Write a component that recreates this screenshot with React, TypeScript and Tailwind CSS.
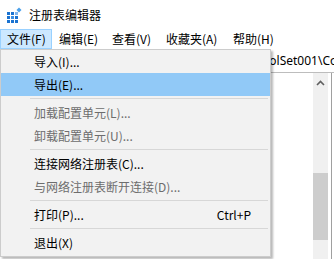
import React from 'react';

type MenuItem =
  | { kind: 'item'; label: string; disabled?: boolean; active?: boolean; shortcut?: string }
  | { kind: 'sep' };

const fileMenu: MenuItem[] = [
  { kind: 'item', label: '导入(I)...' },
  { kind: 'item', label: '导出(E)...', active: true },
  { kind: 'sep' },
  { kind: 'item', label: '加载配置单元(L)...', disabled: true },
  { kind: 'item', label: '卸载配置单元(U)...', disabled: true },
  { kind: 'sep' },
  { kind: 'item', label: '连接网络注册表(C)...' },
  { kind: 'item', label: '与网络注册表断开连接(D)...', disabled: true },
  { kind: 'sep' },
  { kind: 'item', label: '打印(P)...', shortcut: 'Ctrl+P' },
  { kind: 'sep' },
  { kind: 'item', label: '退出(X)' },
];

const menuBar = [
  { label: '文件(F)', width: 'w-[52px]', open: true },
  { label: '编辑(E)', width: 'w-[53px]' },
  { label: '查看(V)', width: 'w-[54px]' },
  { label: '收藏夹(A)', width: 'w-[67px]' },
  { label: '帮助(H)', width: 'w-[60px]' },
];

function RegeditIcon() {
  return (
    <svg width="16" height="16" viewBox="0 0 16 16">
      {/* 3x3 grid, top-right cell lifted out */}
      <rect x="1" y="5" width="3" height="3" fill="#1a73d1" />
      <rect x="5" y="5" width="3" height="3" fill="#1a73d1" />
      <rect x="1" y="9" width="3" height="3" fill="#1a73d1" />
      <rect x="5" y="9" width="3" height="3" fill="#3b8fe3" />
      <rect x="9" y="9" width="3" height="3" fill="#1a73d1" />
      <rect x="1" y="13" width="3" height="3" fill="#1a73d1" />
      <rect x="5" y="13" width="3" height="3" fill="#1a73d1" />
      <rect x="9" y="13" width="3" height="3" fill="#1a73d1" />
      <rect x="9" y="5" width="3" height="3" fill="#7fb6ee" />
      <path d="M13 0.5 L15.5 3 L13 5.5 L10.5 3 Z" fill="#4aa0ea" />
    </svg>
  );
}

function FileMenu() {
  return (
    <div className="absolute left-0 top-0 w-[271px] bg-[#f2f2f2] border border-[#cccccc] pb-[2px] shadow-[2px_2px_2px_rgba(0,0,0,0.28)]">
      {fileMenu.map((item, i) =>
        item.kind === 'sep' ? (
          <div key={i} className="h-[5px] pt-[2px] pl-[29px] pr-[2px]">
            <div className="h-px bg-[#d7d7d7]" />
          </div>
        ) : (
          <div
            key={i}
            className={`h-[23px] flex items-center pl-[33px] pr-[19px] ${
              item.active ? 'bg-[#91c9f7]' : ''
            } ${item.disabled ? 'text-[#6d6d6d]' : 'text-black'}`}
          >
            <span className="flex-1 whitespace-nowrap">{item.label}</span>
            {item.shortcut && <span>{item.shortcut}</span>}
          </div>
        ),
      )}
    </div>
  );
}

export default function App() {
  return (
    <div className="w-[334px] h-[259px] bg-white overflow-hidden flex flex-col text-[12px] font-['Noto_Sans_CJK_SC','Noto_Sans',sans-serif] text-black">
      {/* Title bar */}
      <div className="h-[29px] flex items-center pl-[6px] gap-[7px] shrink-0">
        <RegeditIcon />
        <span className="leading-none">注册表编辑器</span>
      </div>

      {/* Menu bar */}
      <div className="h-[20px] flex shrink-0">
        {menuBar.map((m) => (
          <div
            key={m.label}
            className={`${m.width} h-full flex items-center pl-[6px] whitespace-nowrap ${
              m.open ? 'bg-[#cce8ff] border border-[#99d1ff] pl-[5px] w-[51px] mr-px' : ''
            }`}
          >
            {m.label}
          </div>
        ))}
      </div>

      {/* Window content behind the dropdown */}
      <div className="relative flex-1 flex flex-col">
        <div className="h-[24px] flex items-center border-b border-[#bdbdbd] pl-[238px] whitespace-nowrap font-['Noto_Sans',sans-serif] text-[12px] shrink-0">
          ControlSet001\Control
        </div>
        <div className="flex-1 flex">
          <div className="flex-1" />
          <div className="w-[15px] bg-[#f0f0f0] flex flex-col">
            <div className="h-[20px] flex items-center justify-center">
              <svg width="9" height="6" viewBox="0 0 9 6">
                <path d="M1 5 L4.5 1.5 L8 5" fill="none" stroke="#606060" strokeWidth="1.6" />
              </svg>
            </div>
            <div className="h-[80px]" />
            <div className="h-[67px] bg-[#cdcdcd]" />
          </div>
          <div className="w-[3px]" />
          <div className="w-px bg-[#a0a0a0]" />
          <div className="w-[2px]" />
        </div>

        <FileMenu />
      </div>
    </div>
  );
}
